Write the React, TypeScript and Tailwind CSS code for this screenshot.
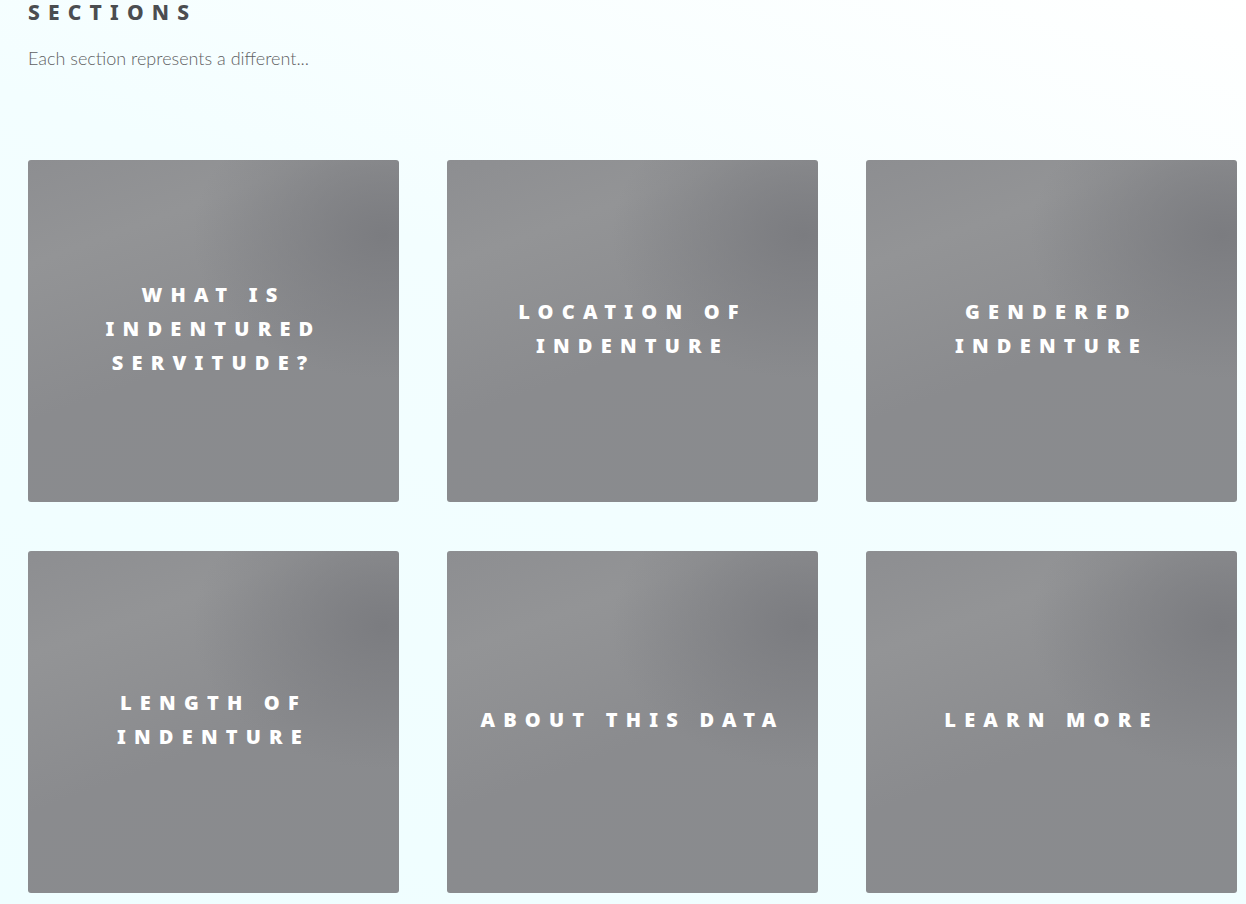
export default function App() {
  const sections = [
    ["WHAT IS", "INDENTURED", "SERVITUDE?"],
    ["LOCATION OF", "INDENTURE"],
    ["GENDERED", "INDENTURE"],
    ["LENGTH OF", "INDENTURE"],
    ["ABOUT THIS DATA"],
    ["LEARN MORE"],
  ];

  return (
    <div className="min-h-[904px] w-full bg-[linear-gradient(200deg,#ffffff_0%,#f3feff_40%,#effeff_100%)] pl-[28px] font-['Lato',sans-serif]">
      <h2 className="pt-[1px] font-['Noto_Sans',sans-serif] text-[21px] font-extrabold leading-[22px] tracking-[0.39em] text-[#4b4d50]">
        SECTIONS
      </h2>
      <p className="mt-[23px] text-[18px] font-light leading-[24px] text-[#5f6163]">
        Each section represents a different...
      </p>

      <div className="mt-[90px] grid grid-cols-[371px_371px_371px] gap-x-[48px] gap-y-[49px]">
        {sections.map((lines, index) => (
          <div
            key={index}
            className="flex h-[342px] items-center justify-center rounded-[3px] bg-[radial-gradient(ellipse_at_96%_22%,#7b7c80_0%,rgba(123,124,128,0)_38%),linear-gradient(160deg,#8d8e91_0%,#939496_22%,#8a8b8e_55%,#898b8e_100%)] pb-[5px]"
          >
            <div className="text-center font-['Noto_Sans',sans-serif] text-[20px] font-black leading-[34px] tracking-[0.41em] text-white">
              {lines.map((line, i) => (
                <div key={i}>{line}</div>
              ))}
            </div>
          </div>
        ))}
      </div>
    </div>
  );
}
